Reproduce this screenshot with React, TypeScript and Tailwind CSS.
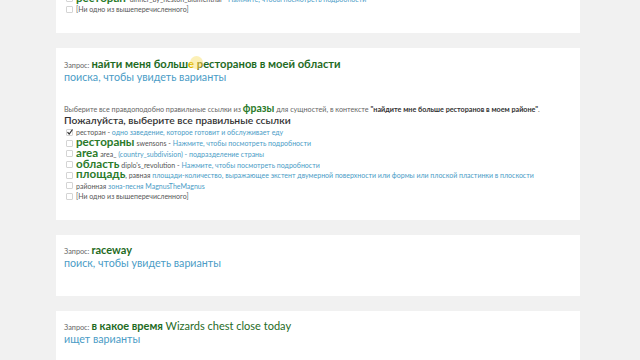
import React from "react";

const font = { fontFamily: "Lato, 'Noto Sans', sans-serif" };

function Box({ checked = false }: { checked?: boolean }) {
  return (
    <span className="relative inline-block w-[7px] h-[7px] border border-[#d4d4d4] bg-white mr-[3px] shrink-0 rounded-[1px]">
      {checked && (
        <svg viewBox="0 0 8 8" className="absolute left-[-1px] top-[-2px] w-[8px] h-[8px]">
          <path d="M1.5 4.2 L3.2 6 L6.5 1.5" stroke="#333" strokeWidth="1.2" fill="none" />
        </svg>
      )}
    </span>
  );
}

function Row({ children, checked }: { children: React.ReactNode; checked?: boolean }) {
  return (
    <div className="flex items-center h-[10.7px] whitespace-nowrap pl-[2px]">
      <Box checked={checked} />
      <div className="flex items-baseline">{children}</div>
    </div>
  );
}

const T = ({ children }: { children: React.ReactNode }) => (
  <span className="text-[7px] text-[#555]">{children}</span>
);
const L = ({ children }: { children: React.ReactNode }) => (
  <span className="text-[7px] text-[#4a9cc6]">{children}</span>
);
const G = ({ children }: { children: React.ReactNode }) => (
  <span className="text-[11.6px] leading-[10px] font-bold text-[#2a7a2a] mr-[2px]">{children}</span>
);

function Query({ children }: { children: React.ReactNode }) {
  return (
    <div className="flex items-baseline h-[14px] whitespace-nowrap">
      <span className="text-[7.3px] text-[#666] mr-[2px]">Запрос:</span>
      {children}
    </div>
  );
}

function Sub({ children }: { children: React.ReactNode }) {
  return <div className="text-[10.7px] leading-[14px] text-[#4a9cc6] whitespace-nowrap">{children}</div>;
}

export default function App() {
  return (
    <div style={font} className="w-[640px] h-[360px] overflow-hidden bg-[#f1f1f1]">
      <div className="ml-[56px] w-[524px] flex flex-col gap-[15px] mt-[-14px]">
        {/* card 1 (cut off) */}
        <div className="bg-white px-[8px] pt-[7px] h-[47px]">
          <Row>
            <G>ресторан</G>
            <T>&nbsp;dinner_by_heston_blumenthal -&nbsp;</T>
            <L>Нажмите, чтобы посмотреть подробности</L>
          </Row>
          <Row>
            <T>[Ни одно из вышеперечисленного]</T>
          </Row>
        </div>

        {/* card 2 */}
        <div className="bg-white px-[8px] pt-[8px] h-[172px]">
          <Query>
            <span className="text-[11.2px] font-bold text-[#1f6b1f]">
              найти меня больш
              <span className="relative">
                <span className="text-[#d9b400]">е</span>
                <span className="absolute left-[2px] top-[-1px] w-[13px] h-[13px] rounded-full bg-[#f7d94a] opacity-40" />
              </span>{" "}
              <span className="text-[#7d7a15]">р</span>есторанов в моей области
            </span>
          </Query>
          <Sub>поиска, чтобы увидеть варианты</Sub>
          <div className="h-[17px]" />
          <div className="flex items-baseline h-[11px] whitespace-nowrap">
            <span className="text-[7.2px] text-[#666]">Выберите все правдоподобно правильные ссылки из&nbsp;</span>
            <span className="text-[10.5px] font-bold text-[#2a7a2a]">фразы</span>
            <span className="text-[7.2px] text-[#666]">&nbsp;для сущностей, в контексте&nbsp;</span>
            <span className="text-[7.2px] font-bold text-[#333]">"найдите мне больше ресторанов в моем районе"</span>
            <span className="text-[7.2px] text-[#666]">.</span>
          </div>
          <div className="text-[10.3px] leading-[14px] font-semibold text-[#333] whitespace-nowrap mt-[1px]">
            Пожалуйста, выберите все правильные ссылки
          </div>
          <Row checked>
            <T>ресторан -&nbsp;</T>
            <L>одно заведение, которое готовит и обслуживает еду</L>
          </Row>
          <Row>
            <G>рестораны</G>
            <T>swensons -&nbsp;</T>
            <L>Нажмите, чтобы посмотреть подробности</L>
          </Row>
          <Row>
            <G>area</G>
            <T>area_&nbsp;</T>
            <L>(country_subdivision) - подразделение страны</L>
          </Row>
          <Row>
            <G>область</G>
            <T>diplo's_revolution -&nbsp;</T>
            <L>Нажмите, чтобы посмотреть подробности</L>
          </Row>
          <Row>
            <span className="text-[11.6px] leading-[10px] font-bold text-[#2a7a2a]">площадь</span>
            <T>, равная&nbsp;</T>
            <L>площади-количество, выражающее экстент двумерной поверхности или формы или плоской пластинки в плоскости</L>
          </Row>
          <Row>
            <T>районная&nbsp;</T>
            <L>зона-песня MagnusTheMagnus</L>
          </Row>
          <Row>
            <T>[Ни одно из вышеперечисленного]</T>
          </Row>
        </div>

        {/* card 3 */}
        <div className="bg-white px-[8px] pt-[7px] h-[61px]">
          <Query>
            <span className="text-[11px] font-bold text-[#1f6b1f]">raceway</span>
          </Query>
          <Sub>поиск, чтобы увидеть варианты</Sub>
        </div>

        {/* card 4 */}
        <div className="bg-white px-[8px] pt-[7px] h-[61px]">
          <Query>
            <span className="text-[11px] font-bold text-[#1f6b1f]">в какое время&nbsp;</span>
            <span className="text-[11px] text-[#1f6b1f]">Wizards chest close today</span>
          </Query>
          <Sub>ищет варианты</Sub>
        </div>
      </div>
    </div>
  );
}
